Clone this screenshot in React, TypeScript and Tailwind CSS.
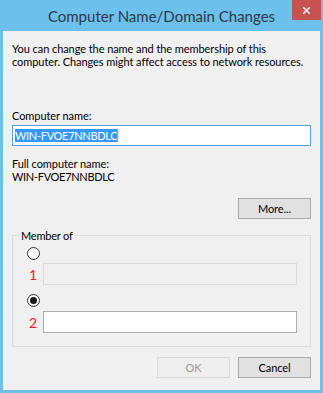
import { X } from "lucide-react";

const font = "font-['Segoe_UI','Lato','Liberation_Sans',sans-serif]";

function Radio({ checked }: { checked?: boolean }) {
  return (
    <span className="flex h-[13px] w-[13px] items-center justify-center rounded-full border border-[#333333] bg-white">
      {checked && <span className="h-[7px] w-[7px] rounded-full bg-[#1a1a1a]" />}
    </span>
  );
}

export default function App() {
  return (
    <div
      className={`flex h-[393px] w-[323px] flex-col bg-[#6bc1ec] text-[11px] leading-[13px] tracking-[-0.07px] text-black ${font}`}
    >
      {/* Title bar */}
      <div className="relative flex h-[31px] shrink-0 items-center justify-center">
        <span className="pt-[1px] text-[15px] leading-[18px] tracking-normal text-[#2b3a46]">
          Computer Name/Domain Changes
        </span>
        <button className="absolute right-[2px] top-0 flex h-[20px] w-[29px] items-center justify-center bg-[#c75050] text-white">
          <X size={11} strokeWidth={3.2} />
        </button>
      </div>

      {/* Body */}
      <div className="mx-[3px] mb-[3px] flex flex-1 flex-col bg-[#f0f0f0] px-[9px]">
        <p className="mt-[11px] whitespace-nowrap">
          You can change the name and the membership of this
          <br />
          computer. Changes might affect access to network resources.
        </p>

        <label className="mt-[41px]">Computer name:</label>
        <div className="mt-[3px] flex h-[21px] items-center border border-[#569de5] bg-white px-[2px]">
          <span className="bg-[#3399ff] tracking-[-0.3px] text-white">WIN-FVOE7NNBDLC</span>
          <span className="h-[13px] w-[1px] bg-[#ff8c00]" />
        </div>

        <div className="mt-[11px]">Full computer name:</div>
        <div className="tracking-[-0.3px]">WIN-FVOE7NNBDLC</div>

        <div className="mt-[15px] flex justify-end">
          <button className="h-[21px] w-[73px] border border-[#adadad] bg-[#e1e1e1]">
            More...
          </button>
        </div>

        {/* Member of group */}
        <div className="mt-[16px] flex flex-col border border-[#dcdcdc] pb-[13px]">
          <span className="-mt-[7px] ml-[6px] w-fit bg-[#f0f0f0] px-[2px] tracking-[-0.2px]">
            Member of
          </span>
          <div className="ml-[14px] mt-[5px]">
            <Radio />
          </div>
          <div className="ml-[14px] mt-[3px] flex items-center">
            <span className="w-[12px] text-center text-[14px] text-[#ee1c24]">1</span>
            <div className="ml-[4px] h-[22px] w-[254px] border border-[#dadada] bg-[#f0f0f0]" />
          </div>
          <div className="ml-[14px] mt-[9px]">
            <Radio checked />
          </div>
          <div className="ml-[14px] mt-[4px] flex items-center">
            <span className="w-[12px] text-center text-[14px] text-[#ee1c24]">2</span>
            <div className="ml-[4px] h-[22px] w-[254px] border border-[#abadb3] bg-white" />
          </div>
        </div>

        <div className="mt-[10px] flex justify-end gap-[8px]">
          <button className="h-[21px] w-[73px] border border-[#d9d9d9] bg-[#eeeeee] text-[#9a9a9a]">
            OK
          </button>
          <button className="h-[21px] w-[73px] border border-[#adadad] bg-[#e1e1e1]">
            Cancel
          </button>
        </div>
      </div>
    </div>
  );
}
